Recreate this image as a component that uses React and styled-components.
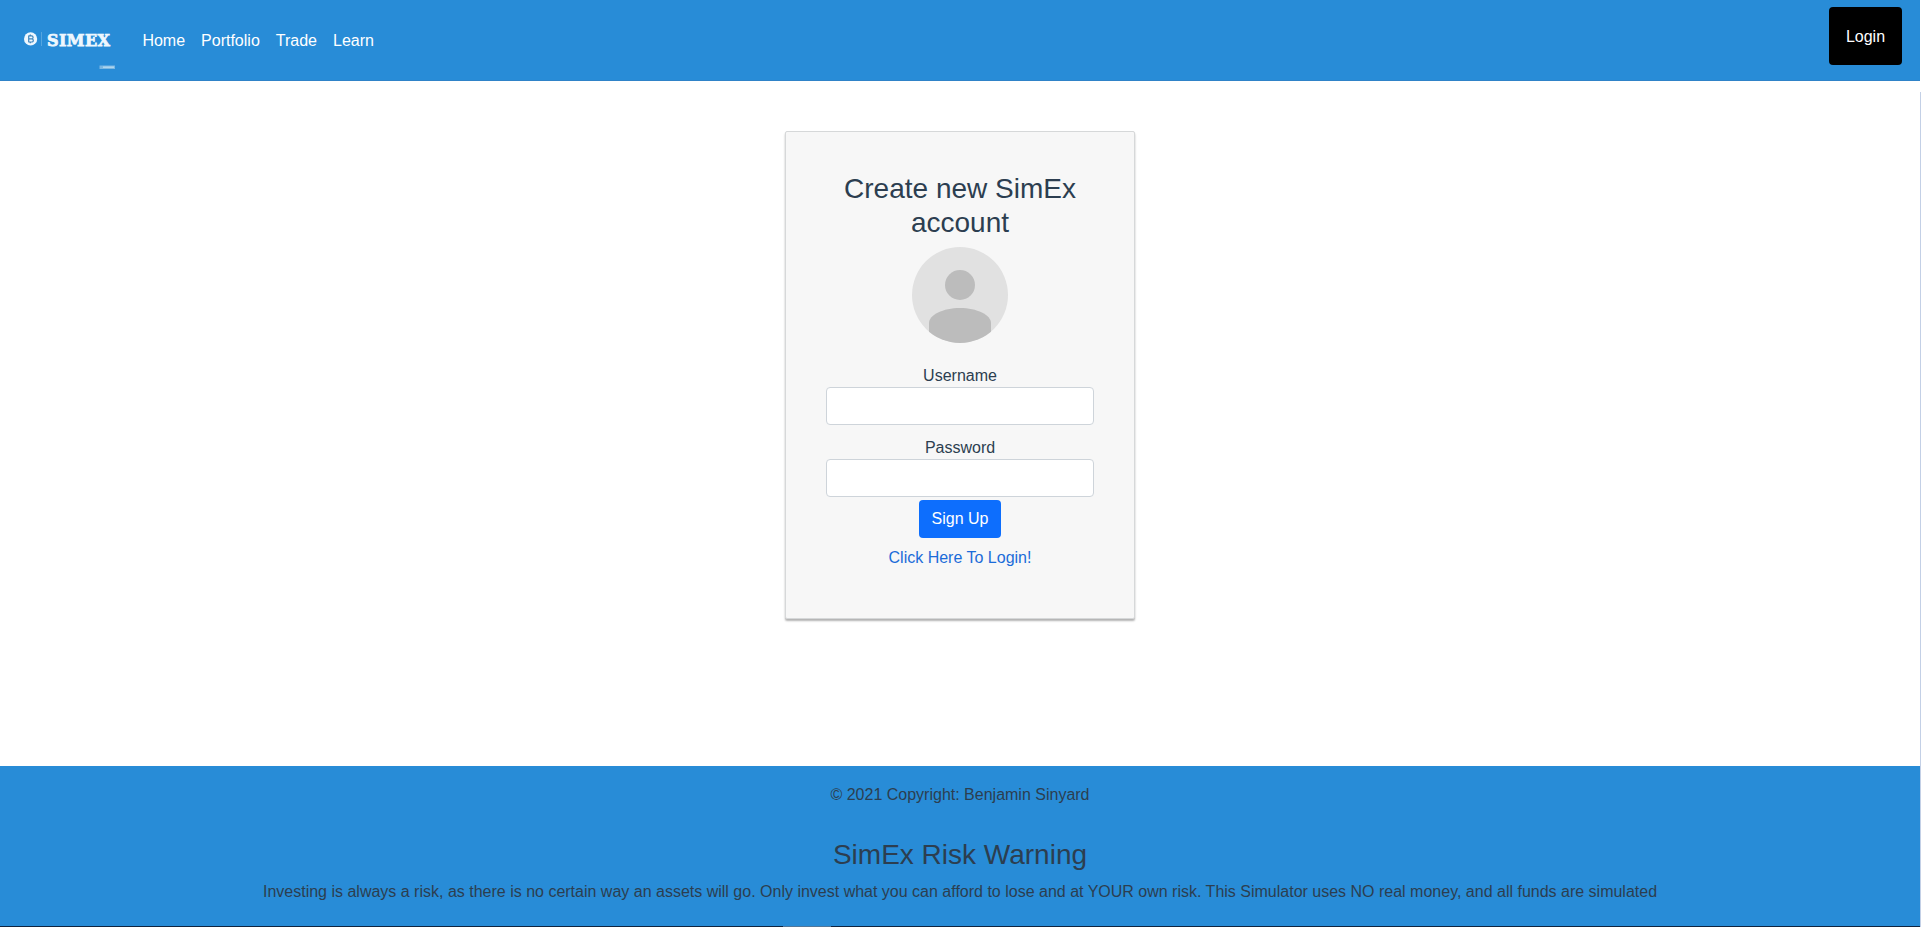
import React from "react";
import styled, { createGlobalStyle } from "styled-components";

const GlobalStyle = createGlobalStyle`
  *, *::before, *::after { box-sizing: border-box; }
  body {
    margin: 0;
    overflow: hidden;
    background: #fff;
    color: #2c3e50;
    font-family: "Liberation Sans", Arial, sans-serif;
    font-size: 16px;
    line-height: 1.5;
  }
`;

const Frame = styled.div`
  display: flex;
  height: 927px;
`;

const Page = styled.div`
  flex: 1;
  display: flex;
  flex-direction: column;
  min-width: 0;
`;

const Edge = styled.div`
  width: 1px;
  margin-top: 92px;
  background: #c3d0e6;
`;

const Navbar = styled.nav`
  display: flex;
  align-items: center;
  height: 81px;
  padding-left: 20px;
  background: #288cd7;
  border-bottom: 1px solid #2f83c8;
`;

const Logo = styled.svg`
  width: 100px;
  height: 80px;
  margin-right: 14.4px;
`;

const NavLink = styled.a`
  padding: 10px 8px 8px;
  color: #fff;
  text-decoration: none;
`;

const LoginButton = styled.button`
  align-self: flex-start;
  width: 73px;
  height: 58px;
  margin: 7px 18px 0 auto;
  padding: 2px 0 0;
  border: 0;
  border-radius: 4px;
  background: #000;
  color: #fff;
  font: inherit;
`;

const Main = styled.main`
  flex: 1;
  display: flex;
  justify-content: center;
  align-items: flex-start;
  padding-top: 50px;
`;

const Card = styled.form`
  display: flex;
  flex-direction: column;
  align-items: center;
  width: 350px;
  height: 488px;
  padding: 40px;
  border: 1px solid #d6d8d9;
  border-radius: 2px;
  background: #f7f7f7;
  box-shadow: 0 2px 2px rgba(0, 0, 0, 0.3);
`;

const Title = styled.h3`
  margin: 0 0 8px;
  font-size: 28px;
  font-weight: 400;
  line-height: 1.2;
  text-align: center;
`;

const Avatar = styled.svg`
  width: 96px;
  height: 96px;
  margin-bottom: 10px;
  flex: none;
`;

const Field = styled.label`
  display: flex;
  flex-direction: column;
  align-items: center;
  width: 100%;
  height: 62px;
  margin-top: 10px;
  padding-top: 1px;
`;

const Input = styled.input`
  width: 100%;
  height: 38px;
  margin-top: -1px;
  padding: 6px 12px;
  border: 1px solid #ced4da;
  border-radius: 4px;
  background: #fff;
  font: inherit;
`;

const SubmitButton = styled.button`
  width: 82px;
  height: 38px;
  margin: 3px 0 8px;
  padding: 0;
  border: 0;
  border-radius: 4px;
  background: #0d6efd;
  color: #fff;
  font: inherit;
`;

const TextLink = styled.a`
  color: #1b6cd9;
  text-decoration: none;
`;

const Footer = styled.footer`
  height: 160px;
  background: #288cd7;
  text-align: center;
`;

const Copyright = styled.div`
  padding: 17px 16px 15px;
`;

const Warning = styled.section`
  padding-top: 16px;
`;

const Paragraph = styled.p`
  margin: 0;
`;

const BottomEdge = styled.div`
  display: flex;
  height: 1px;
  padding-left: 783px;
  background: #0e2440;
`;

const BottomMark = styled.div`
  width: 48px;
  background: #51779a;
`;

const navItems = ["Home", "Portfolio", "Trade", "Learn"];

export default function App() {
  return (
    <Frame>
      <GlobalStyle />
      <Page>
        <Navbar>
          <Logo viewBox="20 0 100 80" aria-label="SimEx">
            <circle cx="30.6" cy="38.9" r="6.6" fill="#eef7fe" />
            <g fill="none" stroke="#3e86bd" strokeWidth="1.2">
              <path d="M28.3 35.9h3.3a1.5 1.5 0 0 1 0 3h-3.3m0 0h3.8a1.6 1.6 0 0 1 0 3.1h-3.8M28.7 35.9v6.1M30.3 34.6v1.3M30.3 42v1.3" />
            </g>
            <path d="M41.5 32v14" stroke="#55a5df" strokeWidth="1" />
            <text
              x="47"
              y="45.8"
              fill="#eef7fe"
              stroke="#eef7fe"
              strokeWidth="0.75"
              fontFamily="DejaVu Serif, serif"
              fontWeight="700"
              fontSize="16"
              textLength="63"
              lengthAdjust="spacing"
            >
              SIMEX
            </text>
            <path d="M99.5 65.5h15.5v3.5H99.5z" fill="#7ab7e2" />
            <path d="M103 67.2h11" stroke="#b5d8f0" strokeWidth="1.4" />
          </Logo>
          {navItems.map((item) => (
            <NavLink key={item}>{item}</NavLink>
          ))}
          <LoginButton>Login</LoginButton>
        </Navbar>
        <Main>
          <Card>
            <Title>Create new SimEx account</Title>
            <Avatar viewBox="0 0 96 96">
              <defs>
                <clipPath id="avatar-clip">
                  <circle cx="48" cy="48" r="48" />
                </clipPath>
              </defs>
              <g clipPath="url(#avatar-clip)">
                <path d="M0 0h96v96H0z" fill="#e1e1e1" />
                <circle cx="48" cy="38" r="15" fill="#bcbcbc" />
                <path d="M17 96V76C17 68 31 61 48 61S79 68 79 76V96Z" fill="#bcbcbc" />
              </g>
            </Avatar>
            <Field>
              Username
              <Input type="text" />
            </Field>
            <Field>
              Password
              <Input type="password" />
            </Field>
            <SubmitButton type="button">Sign Up</SubmitButton>
            <TextLink>Click Here To Login!</TextLink>
          </Card>
        </Main>
        <Footer>
          <Copyright>© 2021 Copyright: Benjamin Sinyard</Copyright>
          <Warning>
            <Title>SimEx Risk Warning</Title>
            <Paragraph>
              Investing is always a risk, as there is no certain way an assets will go. Only invest what you can
              afford to lose and at YOUR own risk. This Simulator uses NO real money, and all funds are simulated
            </Paragraph>
          </Warning>
        </Footer>
        <BottomEdge>
          <BottomMark />
        </BottomEdge>
      </Page>
      <Edge />
    </Frame>
  );
}
